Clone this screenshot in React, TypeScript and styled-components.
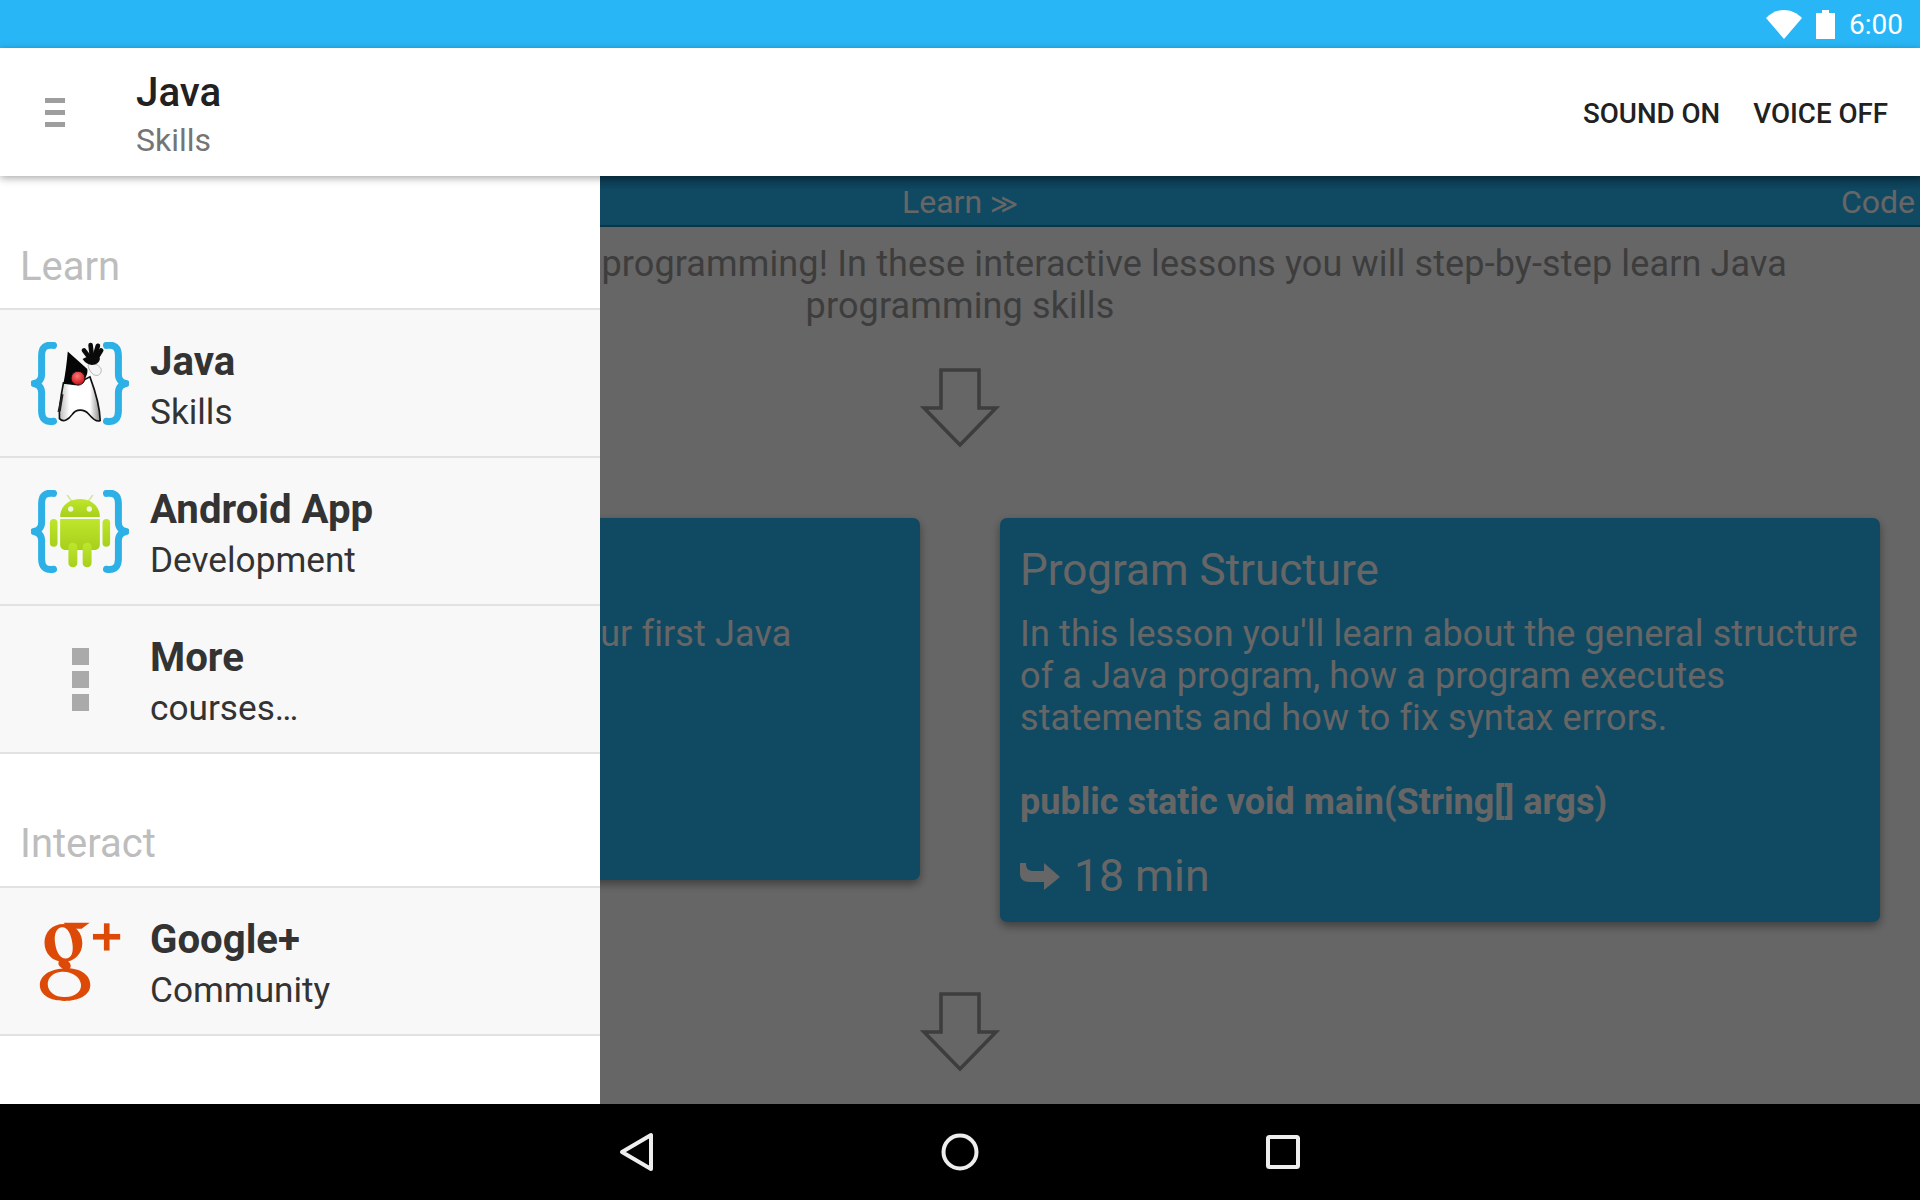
import React from "react";
import styled, { createGlobalStyle } from "styled-components";

const Global = createGlobalStyle`
  html, body { margin: 0; padding: 0; background: #000; }
  body { font-family: Roboto, "Liberation Sans", sans-serif; }
  * { box-sizing: border-box; }
`;

const Screen = styled.div`
  width: 1920px;
  height: 1200px;
  display: flex;
  flex-direction: column;
  overflow: hidden;
  background: #fff;
`;

const StatusBar = styled.div`
  height: 48px;
  flex: none;
  background: #29b6f6;
  display: flex;
  align-items: center;
  justify-content: flex-end;
  padding-right: 17px;
  color: #fff;
`;

const StatusTime = styled.span`
  font-size: 28px;
  margin-left: 14px;
  padding-top: 1px;
`;

const BatteryIcon = styled.svg`
  margin-left: 14px;
`;

const AppBar = styled.header`
  height: 128px;
  flex: none;
  background: #fff;
  display: flex;
  align-items: center;
  position: relative;
  z-index: 3;
  box-shadow: 0 2px 8px rgba(0, 0, 0, 0.35);
`;

const MenuButton = styled.div`
  width: 136px;
  padding-left: 45px;
  display: flex;
  flex-direction: column;
  gap: 7px;
`;

const MenuBar = styled.span`
  display: block;
  width: 20px;
  height: 5px;
  background: #9e9e9e;
`;

const TitleBlock = styled.div`
  flex: 1;
  display: flex;
  flex-direction: column;
  padding-top: 9px;
`;

const AppTitle = styled.div`
  font-size: 40.3px;
  line-height: 47px;
  font-weight: 500;
  color: #212121;
`;

const AppSubtitle = styled.div`
  font-size: 32px;
  line-height: 48px;
  color: #757575;
`;

const ActionRow = styled.div`
  display: flex;
  gap: 33px;
  padding: 3px 32px 0 0;
`;

const ActionLabel = styled.span`
  font-size: 27.7px;
  font-weight: 500;
  color: #212121;
`;

const Main = styled.main`
  flex: 1;
  position: relative;
  overflow: hidden;
  background: #fff;
`;

const TabStrip = styled.div`
  height: 51px;
  display: grid;
  grid-template-columns: 1fr auto 1fr;
  align-items: center;
  background: linear-gradient(#1b8ec4, #29b6f6 14px);
  border-bottom: 2px solid #1a84b6;
  color: #fff;
  font-size: 32px;
`;

const CurrentTab = styled.span`
  padding-top: 2px;
`;

const TabGlyph = styled.span`
  font-size: 27px;
`;

const NextTab = styled.span`
  justify-self: end;
  grid-column: 3;
  padding: 2px 5px 0 0;
`;

const Content = styled.div`
  display: flex;
  flex-direction: column;
  align-items: center;
`;

const Intro = styled.p`
  margin: 16px 0 0;
  width: 1840px;
  text-align: center;
  font-size: 36px;
  line-height: 42px;
  letter-spacing: 0.13px;
  color: #999;
`;

const DownArrow = styled.svg<{ $top: number }>`
  margin-top: ${(p) => p.$top}px;
  display: block;
`;

const CardRow = styled.div`
  margin-top: 70px;
  width: 1840px;
  display: grid;
  grid-template-columns: 880px 880px;
  gap: 80px;
  align-items: start;
`;

const Card = styled.article`
  background: #29b6f6;
  border-radius: 7px;
  padding: 27px 20px 20px;
  color: #fff;
  box-shadow: 0 4px 10px rgba(0, 0, 0, 0.4);
`;

const CardTitle = styled.h3`
  margin: 0;
  font-size: 44px;
  line-height: 50px;
  font-weight: 400;
`;

const CardBody = styled.p`
  margin: 18px 0 0;
  font-size: 36px;
  line-height: 42px;
  letter-spacing: 0.13px;
`;

const CardCode = styled.p`
  margin: 42px 0 0;
  font-size: 36px;
  line-height: 42px;
  font-weight: 700;
  color: #fff;
`;

const Duration = styled.div`
  margin-top: 27px;
  display: flex;
  align-items: center;
  gap: 14px;
  font-size: 44.5px;
  line-height: 52px;
`;

const Scrim = styled.div`
  position: absolute;
  inset: 0;
  background: rgba(0, 0, 0, 0.6);
`;

const Drawer = styled.aside`
  position: absolute;
  left: 0;
  top: 0;
  bottom: 0;
  width: 600px;
  padding-top: 1px;
  background: #fff;
`;

const SectionHeader = styled.div<{ $height: number }>`
  height: ${(p) => p.$height}px;
  display: flex;
  align-items: flex-end;
  padding: 0 0 ${(p) => p.$height - 116}px 20px;
  font-size: 40px;
  line-height: 48px;
  color: #bdbdbd;
  border-bottom: 2px solid #e2e2e2;
`;

const Row = styled.div`
  height: 148px;
  display: flex;
  align-items: center;
  background: #f8f8f8;
  border-bottom: 2px solid #e2e2e2;
`;

const IconSlot = styled.div`
  width: 150px;
  padding-left: 10px;
  display: flex;
  justify-content: center;
  align-items: center;
  flex: none;
`;

const RowText = styled.div`
  display: flex;
  flex-direction: column;
  padding-top: 8px;
`;

const RowTitle = styled.div`
  font-size: 40.2px;
  line-height: 51px;
  font-weight: 700;
  color: #333;
`;

const RowSub = styled.div`
  font-size: 35.2px;
  line-height: 51px;
  color: #333;
`;

const DotColumn = styled.div`
  display: flex;
  flex-direction: column;
  gap: 6px;
`;

const Dot = styled.span`
  display: block;
  width: 17px;
  height: 17px;
  background: #aaa;
`;

const NavBar = styled.nav`
  height: 96px;
  flex: none;
  background: #000;
  display: flex;
  align-items: center;
  justify-content: center;
  gap: 283px;
`;

const WifiIcon = () => (
  <svg width="36" height="29" viewBox="0 0 36 29">
    <path d="M0 8 C5 3 11 0 18 0 C25 0 31 3 36 8 L18 29 Z" fill="#fff" />
  </svg>
);

const Battery = () => (
  <BatteryIcon width="19" height="29" viewBox="0 0 19 29">
    <path d="M6 0 H13 V3 H19 V29 H0 V3 H6 Z" fill="#fff" />
  </BatteryIcon>
);

const Arrow = ({ top }: { top: number }) => (
  <DownArrow $top={top} width="80" height="80" viewBox="0 0 80 80">
    <path d="M21 2 H59 V40 H76 L40 77 L4 40 H21 Z" fill="none" stroke="#999" strokeWidth="3.6" />
  </DownArrow>
);

const ShareArrow = () => (
  <svg width="40" height="27" viewBox="0 0 40 27">
    <path d="M0 0 H6 C6 6 8 8 14 8 H24 V0 L40 14 L24 27 V19 H10 C3 19 0 16 0 10 Z" fill="#fff" />
  </svg>
);

const Brace = () => (
  <g fill="none" stroke="#2cb0e6" strokeWidth="21" strokeLinecap="round" strokeLinejoin="round">
    <path d="M160 77 C135 73 124 84 124 108 V165 C124 180 114 190 101 192 C114 194 124 204 124 220 V275 C124 298 135 310 160 306" />
    <path d="M320 77 C345 73 356 84 356 108 V165 C356 180 366 190 379 192 C366 194 356 204 356 220 V275 C356 298 345 310 320 306" />
  </g>
);

const JavaIcon = () => (
  <svg width="98" height="83" viewBox="92 68 296 248">
    <defs>
      <radialGradient id="nose" cx="45%" cy="35%" r="65%">
        <stop offset="0%" stopColor="#f77" />
        <stop offset="100%" stopColor="#c40d10" />
      </radialGradient>
      <linearGradient id="duke" x1="0" y1="0" x2="1" y2="0">
        <stop offset="0%" stopColor="#bbb" />
        <stop offset="25%" stopColor="#fff" />
        <stop offset="75%" stopColor="#fff" />
        <stop offset="100%" stopColor="#888" />
      </linearGradient>
    </defs>
    <Brace />
    <path
      d="M190 190 C182 230 176 270 178 298 C190 312 206 300 216 286 C228 268 252 268 266 284 C276 296 290 310 301 304 C300 262 288 220 270 172 L225 195 Z"
      fill="url(#duke)"
      stroke="#111"
      strokeWidth="5"
    />
    <path d="M203 95 L262 148 C266 166 250 190 232 195 L190 192 C196 160 200 130 203 95 Z" fill="#050505" />
    <path d="M188 222 C178 240 176 262 172 278 L182 276 C184 260 188 240 190 226 Z" fill="#222" />
    <circle cx="234" cy="176" r="21" fill="url(#nose)" stroke="#111" strokeWidth="3" />
    <path d="M264 136 C278 126 296 134 304 148 C306 162 296 172 282 166 C272 158 266 150 264 136 Z" fill="#f4f4f4" stroke="#999" strokeWidth="2" />
    <g stroke="#0a0a0a" strokeWidth="14" strokeLinecap="round">
      <path d="M272 118 L252 92" />
      <path d="M276 112 L272 76" />
      <path d="M284 112 L294 78" />
      <path d="M288 118 L304 92" />
    </g>
    <path d="M248 118 C262 108 296 104 300 116 C300 128 290 136 276 136 C262 134 254 128 248 118 Z" fill="#0a0a0a" />
  </svg>
);

const AndroidIcon = () => (
  <svg width="98" height="83" viewBox="92 512 296 248">
    <defs>
      <linearGradient id="droid" x1="0" y1="0" x2="0" y2="1">
        <stop offset="0%" stopColor="#bde62c" />
        <stop offset="100%" stopColor="#a8d01c" />
      </linearGradient>
    </defs>
    <g transform="translate(0 444)">
      <Brace />
    </g>
    <g stroke="#cfe08a" strokeWidth="4" strokeLinecap="round">
      <path d="M216 546 L202 527" />
      <path d="M264 546 L278 527" />
    </g>
    <path d="M180 592 C180 558 208 538 240 538 C272 538 300 558 300 592 Z" fill="url(#droid)" />
    <circle cx="212" cy="568" r="8" fill="#f3f8dc" />
    <circle cx="268" cy="568" r="8" fill="#f3f8dc" />
    <path d="M180 598 H300 V676 C300 686 292 692 282 692 H198 C188 692 180 686 180 676 Z" fill="url(#droid)" />
    <rect x="149" y="598" width="23" height="84" rx="11.5" fill="url(#droid)" />
    <rect x="308" y="598" width="23" height="84" rx="11.5" fill="url(#droid)" />
    <rect x="205" y="670" width="27" height="74" rx="13" fill="url(#droid)" />
    <rect x="248" y="670" width="27" height="74" rx="13" fill="url(#droid)" />
  </svg>
);

const GooglePlusIcon = () => (
  <svg width="85" height="83" viewBox="115 150 255 250">
    <g fill="#dd4a08">
      <path
        fillRule="evenodd"
        d="M192 162 C226 162 248 188 248 220 C248 252 224 276 192 276 C158 276 134 252 134 218 C134 186 158 162 192 162 Z M186 172 C170 174 162 192 166 220 C170 250 184 268 200 266 C216 264 222 246 218 220 C214 190 202 170 186 172 Z"
      />
      <path d="M192 158 H270 L246 176 H205 Z" />
      <path d="M180 270 C170 284 178 292 204 306 C218 288 214 284 204 272 Z" />
      <path
        fillRule="evenodd"
        d="M190 296 C236 292 272 312 272 346 C272 376 238 394 194 394 C152 394 120 376 120 346 C120 316 152 298 190 296 Z M186 306 C160 308 142 324 144 346 C146 370 170 384 198 382 C226 380 246 366 244 344 C242 322 216 304 186 306 Z"
      />
      <rect x="280" y="192" width="82" height="17" />
      <rect x="313" y="160" width="17" height="82" />
    </g>
  </svg>
);

const Back = () => (
  <svg width="40" height="44" viewBox="0 0 40 44">
    <path d="M34 5 V39 L5 22 Z" fill="none" stroke="#eee" strokeWidth="4" strokeLinejoin="round" />
  </svg>
);

const Home = () => (
  <svg width="40" height="40" viewBox="0 0 40 40">
    <circle cx="20" cy="20" r="16.5" fill="none" stroke="#eee" strokeWidth="4" />
  </svg>
);

const Recent = () => (
  <svg width="40" height="40" viewBox="0 0 40 40">
    <rect x="5" y="5" width="30" height="30" rx="1.5" fill="none" stroke="#eee" strokeWidth="4" />
  </svg>
);

export default function App() {
  return (
    <Screen>
      <Global />
      <StatusBar>
        <WifiIcon />
        <Battery />
        <StatusTime>6:00</StatusTime>
      </StatusBar>
      <AppBar>
        <MenuButton>
          <MenuBar />
          <MenuBar />
          <MenuBar />
        </MenuButton>
        <TitleBlock>
          <AppTitle>Java</AppTitle>
          <AppSubtitle>Skills</AppSubtitle>
        </TitleBlock>
        <ActionRow>
          <ActionLabel>SOUND ON</ActionLabel>
          <ActionLabel>VOICE OFF</ActionLabel>
        </ActionRow>
      </AppBar>
      <Main>
        <TabStrip>
          <span />
          <CurrentTab>
            Learn <TabGlyph>≫</TabGlyph>
          </CurrentTab>
          <NextTab>Code</NextTab>
        </TabStrip>
        <Content>
          <Intro>
            Welcome to the core of Java programming! In these interactive lessons you will
            step-by-step learn Java programming skills
          </Intro>
          <Arrow top={41} />
          <CardRow>
            <Card>
              <CardTitle>First Program</CardTitle>
              <CardBody>In this lesson you will generate your first Java program.</CardBody>
              <CardCode>Hello World</CardCode>
              <Duration>
                <ShareArrow />
                12 min
              </Duration>
            </Card>
            <Card>
              <CardTitle>Program Structure</CardTitle>
              <CardBody>
                In this lesson you'll learn about the general structure of a Java program, how a
                program executes statements and how to fix syntax errors.
              </CardBody>
              <CardCode>public static void main(String[] args)</CardCode>
              <Duration>
                <ShareArrow />
                18 min
              </Duration>
            </Card>
          </CardRow>
          <Arrow top={70} />
        </Content>
        <Scrim />
        <Drawer>
          <SectionHeader $height={133}>Learn</SectionHeader>
          <Row>
            <IconSlot>
              <JavaIcon />
            </IconSlot>
            <RowText>
              <RowTitle>Java</RowTitle>
              <RowSub>Skills</RowSub>
            </RowText>
          </Row>
          <Row>
            <IconSlot>
              <AndroidIcon />
            </IconSlot>
            <RowText>
              <RowTitle>Android App</RowTitle>
              <RowSub>Development</RowSub>
            </RowText>
          </Row>
          <Row>
            <IconSlot>
              <DotColumn>
                <Dot />
                <Dot />
                <Dot />
              </DotColumn>
            </IconSlot>
            <RowText>
              <RowTitle>More</RowTitle>
              <RowSub>courses…</RowSub>
            </RowText>
          </Row>
          <SectionHeader $height={134}>Interact</SectionHeader>
          <Row>
            <IconSlot>
              <GooglePlusIcon />
            </IconSlot>
            <RowText>
              <RowTitle>Google+</RowTitle>
              <RowSub>Community</RowSub>
            </RowText>
          </Row>
        </Drawer>
      </Main>
      <NavBar>
        <Back />
        <Home />
        <Recent />
      </NavBar>
    </Screen>
  );
}
